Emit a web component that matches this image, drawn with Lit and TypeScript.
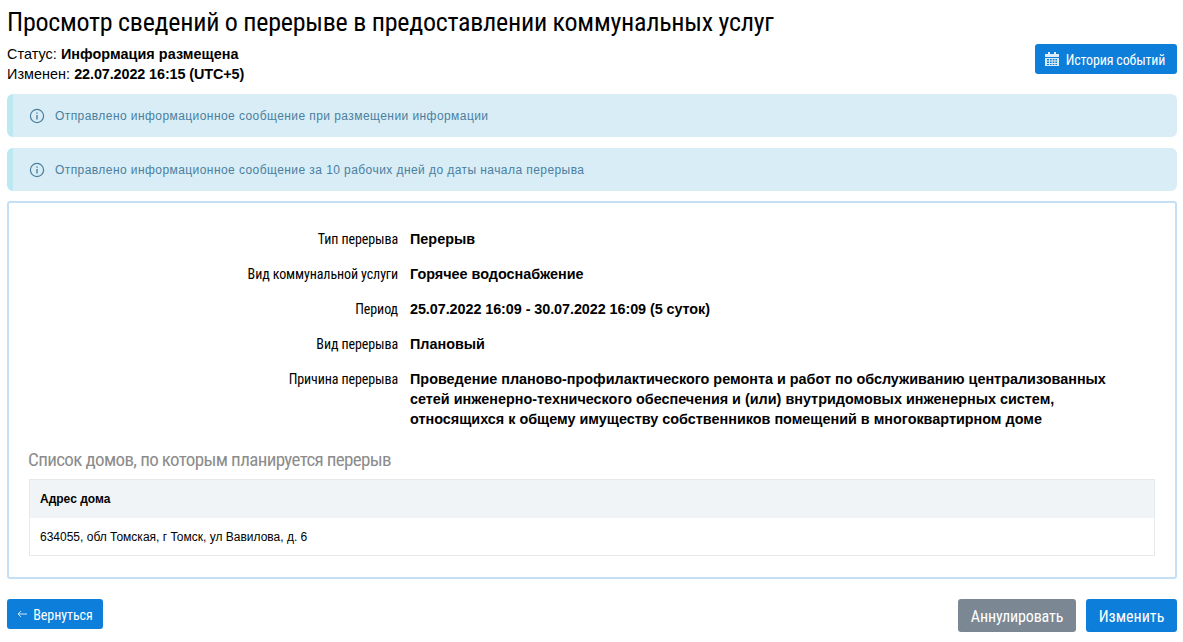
import { LitElement, html, css } from "lit";
import { customElement } from "lit/decorators.js";

const info = html`<svg class="info" viewBox="0 0 16 16" width="16" height="16" fill="none" stroke="currentColor"><circle cx="8" cy="8" r="6.6" stroke-width="1.2"/><path d="M8 7v4.4" stroke-width="1.4"/><path d="M8 4.400v1.400" stroke-width="1.4"/></svg>`;

const rows: [string, string, boolean][] = [
  ["Тип перерыва", "Перерыв", false],
  ["Вид коммунальной услуги", "Горячее водоснабжение", false],
  ["Период", "25.07.2022 16:09 - 30.07.2022 16:09 (5 суток)", true],
  ["Вид перерыва", "Плановый", false],
  ["Причина перерыва", "Проведение планово-профилактического ремонта и работ по обслуживанию централизованных сетей инженерно-технического обеспечения и (или) внутридомовых инженерных систем, относящихся к общему имуществу собственников помещений в многоквартирном доме", false],
];

@customElement("app-root")
export class AppRoot extends LitElement {
  static styles = css`
    :host { display: block; height: 642px; overflow: hidden; background: #fff; color: #000; font-family: "Liberation Sans", Arial, sans-serif; font-size: 14px; }
    .page { padding: 0 6px 0 7px; display: flex; flex-direction: column; }
    .cond { font-family: Roboto, sans-serif; font-stretch: 75%; }
    h1 { margin: 0; padding-top: 7px; font-size: 26px; letter-spacing: -0.26px; line-height: 30px; font-weight: 400; white-space: nowrap; }
    .meta { display: flex; justify-content: space-between; align-items: flex-start; height: 50px; margin-top: 7px; }
    .status { line-height: 20px; font-size: 14.4px; letter-spacing: 0.05px; }
    .status b { font-weight: 700; }
    .status b.num { letter-spacing: -0.1px; }
    .num { letter-spacing: -0.07px; }
    .btn { display: inline-flex; align-items: center; justify-content: center; box-sizing: border-box; border-radius: 3px; background: #0d7ed9; color: #fff; font-size: 14px; white-space: nowrap; }
    .btn span { padding-top: 2px; }
    .hist { width: 142px; height: 30px; gap: 7px; letter-spacing: -0.15px; padding-right: 2px; }
    .alert { box-sizing: border-box; height: 43px; margin-bottom: 11px; display: flex; align-items: center; gap: 10px; padding-left: 16px; background: #d9edf7; border-left: 6px solid #bce8f1; border-radius: 6px; color: #4a7f9f; font-size: 12px; letter-spacing: 0.43px; }
    .panel { box-sizing: border-box; height: 378px; margin-top: -1px; border: 2px solid #c3e0f7; border-radius: 3px; padding: 26px 20px 0 20px; }
    .row { display: grid; grid-template-columns: 369px 1fr; column-gap: 12px; padding-bottom: 15px; }
    .row .k { text-align: right; font-size: 14px; letter-spacing: -0.1px; line-height: 20px; }
    .row .v { font-weight: 700; font-size: 14.4px; line-height: 20px; max-width: 710px; }
    h2 { margin: 0 0 0 -1px; padding-top: 4px; font-size: 19px; letter-spacing: -0.64px; line-height: 24px; font-weight: 400; color: #8c8c8c; }
    .tbl { margin-top: 7px; border: 1px solid #e6e9ec; }
    .th { height: 38px; background: #f1f4f7; display: flex; align-items: center; padding-left: 10px; font-size: 12px; font-weight: 700; }
    .td { height: 37px; display: flex; align-items: center; padding-left: 10px; font-size: 12px; }
    .foot { display: flex; justify-content: space-between; align-items: flex-start; margin-top: 20px; }
    .back { width: 96px; height: 30px; gap: 6px; letter-spacing: -0.05px; }
    .right { display: flex; gap: 10px; }
    .gray { background: #7b8894; }
    .a { width: 118px; height: 33px; font-size: 16px; letter-spacing: -0.15px; }
    .e { width: 91px; height: 33px; font-size: 16px; }
  `;
  render() {
    return html`<div class="page">
      <h1 class="cond">Просмотр сведений о перерыве в предоставлении коммунальных услуг</h1>
      <div class="meta">
        <div class="status"><div>Статус: <b>Информация размещена</b></div><div>Изменен: <b class="num">22.07.2022 16:15 (UTC+5)</b></div></div>
        <div class="btn hist cond"><svg width="14" height="14" viewBox="0 0 14 14" fill="#dcecf9"><path d="M0 2h3V0h2v2h4V0h2v2h3v3H0z"/><path fill-rule="evenodd" d="M0 6h14v8H0zM2 7v1.500h2V7zm3 0v1.500h1.700V7zm2.700 0v1.500h1.700V7zm2.700 0v1.500h1.600V7zM2 9.500V11h2V9.500zm3 0V11h1.700V9.500zm2.700 0V11h1.700V9.500zm2.700 0V11h1.600V9.500zM2 12v1h2v-1zm3 0v1h1.700v-1zm2.700 0v1h1.700v-1zm2.700 0v1h1.600v-1z"/></svg><span>История событий</span></div>
      </div>
      <div class="alert">${info}<span>Отправлено информационное сообщение при размещении информации</span></div>
      <div class="alert">${info}<span>Отправлено информационное сообщение за 10 рабочих дней до даты начала перерыва</span></div>
      <div class="panel">
        ${rows.map(([k, v, n]) => html`<div class="row"><div class="k cond">${k}</div><div class="v ${n ? "num" : ""}">${v}</div></div>`)}
        <h2 class="cond">Список домов, по которым планируется перерыв</h2>
        <div class="tbl"><div class="th">Адрес дома</div><div class="td">634055, обл Томская, г Томск, ул Вавилова, д. 6</div></div>
      </div>
      <div class="foot">
        <div class="btn back cond"><svg width="10" height="8" viewBox="0 0 10 8" fill="none" stroke="#cfe6f8" stroke-width="1"><path d="M10 4H1M4 1 1 4l3 3"/></svg><span>Вернуться</span></div>
        <div class="right"><div class="btn gray a cond"><span>Аннулировать</span></div><div class="btn e cond"><span>Изменить</span></div></div>
      </div>
    </div>`;
  }
}
